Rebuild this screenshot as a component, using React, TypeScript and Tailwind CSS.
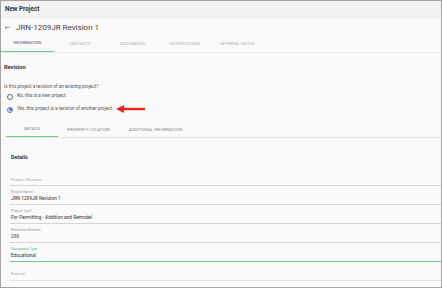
import React from 'react';

const FIELDS = [
  { label: 'Project Name', value: 'JRN-1209JR Revision 1' },
  { label: 'Project Type*', value: 'For Permitting - Addition and Remodel' },
  { label: 'Reference Number', value: '296' },
];

const TABS = ['Information', 'Contacts', 'Documents', 'Notifications', 'Internal Notes'];

const Radio: React.FC<{ checked?: boolean; label: string }> = ({ checked, label }) => (
  <div className="flex items-center h-[13px] pl-[6px] gap-[4px]">
    <span
      className={`w-[6px] h-[6px] rounded-full border flex items-center justify-center ${
        checked ? 'border-[#5c6bc0]' : 'border-[#666]'
      }`}
    >
      {checked && <span className="w-[3px] h-[3px] rounded-full bg-[#5c6bc0]" />}
    </span>
    <span className="text-[4.6px] text-[#555]">{label}</span>
  </div>
);

export default function App() {
  return (
    <div
      className="w-[442px] h-[288px] border border-[#a3a3a3] bg-[#fafafa] overflow-hidden flex flex-col"
      style={{ fontFamily: 'Roboto, sans-serif' }}
    >
      <div className="h-[18px] shrink-0 bg-[#f2f2f2] flex items-center pl-[4px] text-[6.3px] font-bold text-[#333]">
        New Project
      </div>

      <div className="h-[17px] shrink-0 flex items-center pl-[3px]">
        <svg width="7" height="7" viewBox="0 0 24 24" fill="none" stroke="#666" strokeWidth="2">
          <path d="M20 12H4M10 6l-6 6 6 6" />
        </svg>
        <span className="ml-[5px] text-[8px] text-[#444]">JRN-1209JR Revision 1</span>
      </div>

      <div className="h-[17px] shrink-0 flex border-b border-[#e8e8e8]">
        {TABS.map((t, i) => (
          <div
            key={t}
            className={`w-[52.5px] flex items-center justify-center uppercase text-[4.2px] font-medium ${
              i === 0 ? 'text-[#777] border-b-[1.5px] border-[#6ccb8f]' : 'text-[#c0c0c0]'
            }`}
          >
            {t}
          </div>
        ))}
      </div>

      <div className="pl-[3px] mt-[10px] text-[5.6px] font-bold text-[#333]">Revision</div>
      <div className="pl-[3px] mt-[13px] text-[4.6px] text-[#555]">Is this project a revision of an existing project?</div>
      <div className="-mt-[1px] relative">
        <Radio label="No, this is a new project." />
        <Radio checked label="Yes, this project is a revision of another project." />
        <svg className="absolute left-[115px] top-[15px]" width="29" height="8" viewBox="0 0 29 8">
          <path d="M29 4H6" stroke="#e8271d" strokeWidth="2.4" />
          <path d="M0 4L8 0V8Z" fill="#e8271d" />
        </svg>
      </div>

      <div className="ml-[5px] mt-[6px] h-[16px] shrink-0 flex border-b border-[#e6e6e6]">
        <div className="w-[52px] flex items-center justify-center uppercase text-[4.3px] text-[#777] border-b-[1.5px] border-[#6ccb8f]">
          Details
        </div>
        <div className="w-[61px] flex items-center justify-center uppercase text-[4.3px] text-[#888]">
          Property Location
        </div>
        <div className="w-[73px] flex items-center justify-center uppercase text-[4.3px] text-[#888]">
          Additional Information
        </div>
      </div>

      <div className="pl-[10px] mt-[15px] text-[5.4px] font-bold text-[#333]">Details</div>

      <div className="ml-[9px] mt-[13px] flex flex-col">
        <div className="h-[12px] flex items-end pb-[2px] border-b border-[#d6d6d6] text-[4.4px] text-[#aaa] pl-[1px]">
          Project Number
        </div>
        {FIELDS.map((f) => (
          <div key={f.label} className="h-[19px] flex flex-col justify-end pb-[2px] border-b border-[#d6d6d6] pl-[1px]">
            <span className="text-[3.6px] text-[#999] leading-[5px]">{f.label}</span>
            <span className="text-[4.8px] text-[#333] leading-[7px]">{f.value}</span>
          </div>
        ))}
        <div className="h-[19px] flex flex-col justify-end pb-[2px] border-b-[1.5px] border-[#6ccb8f] pl-[1px]">
          <span className="text-[3.6px] text-[#4cb872] leading-[5px]">Occupancy Type</span>
          <span className="text-[4.8px] text-[#333] leading-[7px]">Educational</span>
        </div>
        <div className="h-[19px] flex items-end pb-[3px] border-b-[1.5px] border-[#e0e0e0] text-[4.4px] text-[#aaa] pl-[1px]">
          Priority
        </div>
      </div>
    </div>
  );
}
